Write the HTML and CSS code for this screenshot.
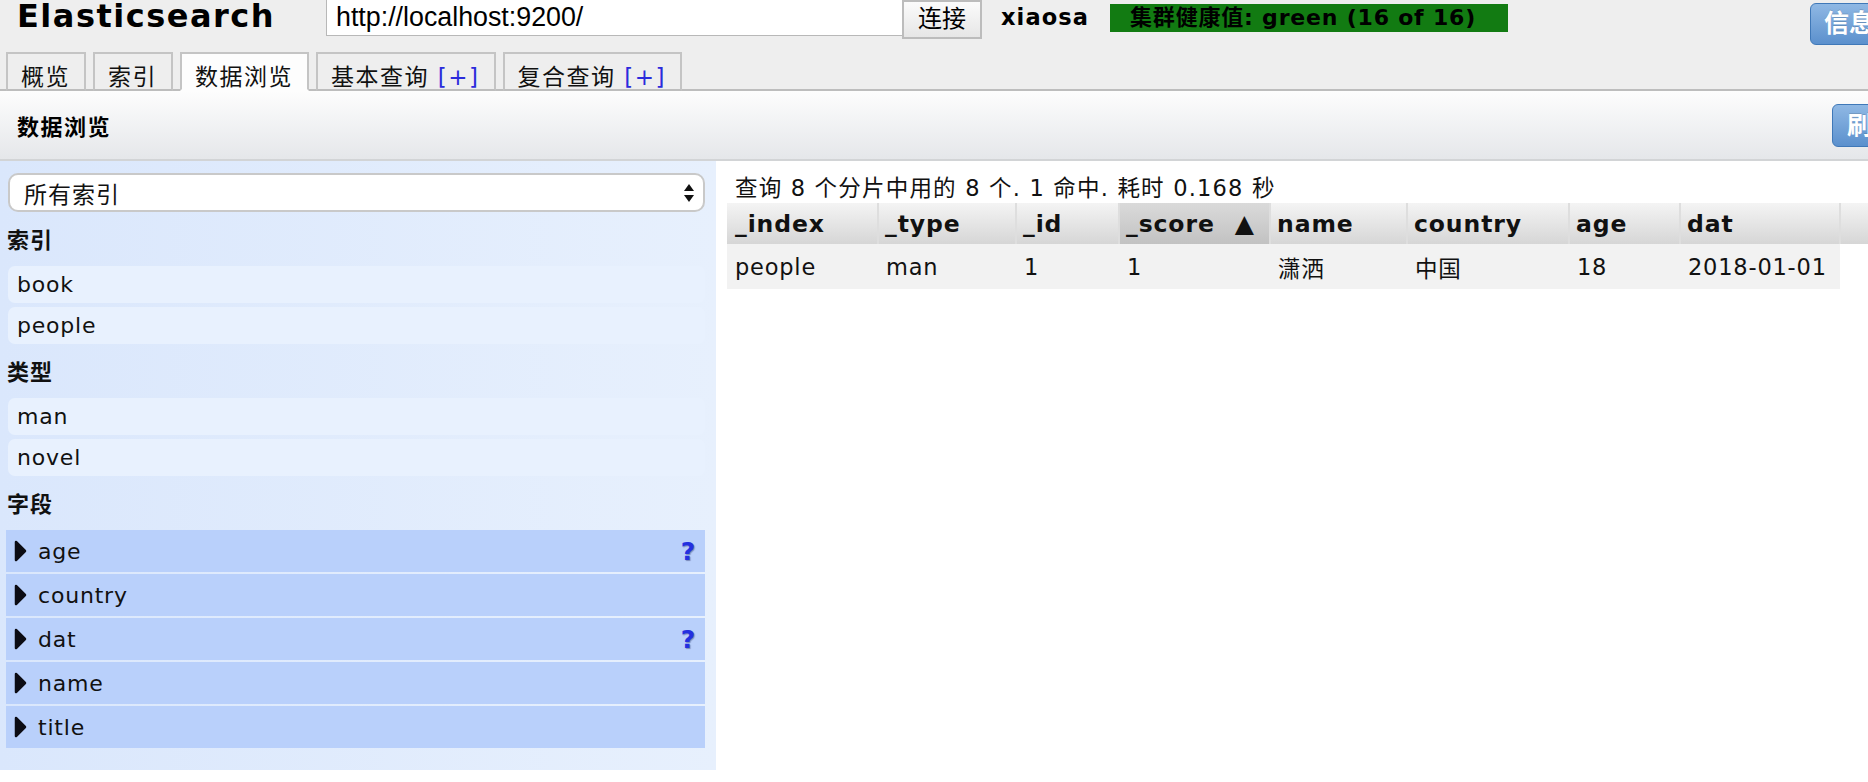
FILE: index.html
```html
<!DOCTYPE html>
<html lang="zh-CN">
<head>
<meta charset="utf-8">
<title>Elasticsearch</title>
<link rel="stylesheet" href="styles.css">
</head>
<body>
<div class="page">
  <header class="topbar">
    <h1 class="brand">Elasticsearch</h1>
    <div class="url">http://localhost:9200/</div>
    <div class="connect">连接</div>
    <span class="cluster">xiaosa</span>
    <span class="health">集群健康值: green (16 of 16)</span>
    <span class="grow"></span>
    <div class="btn-blue btn-info">信息 ▾</div>
  </header>

  <nav class="tabs">
    <div class="tab">概览</div>
    <div class="tab">索引</div>
    <div class="tab tab-active">数据浏览</div>
    <div class="tab">基本查询 <span class="plus">[+]</span></div>
    <div class="tab">复合查询 <span class="plus">[+]</span></div>
  </nav>

  <div class="toolbar">
    <h2 class="toolbar-title">数据浏览</h2>
    <span class="grow"></span>
    <div class="btn-blue btn-refresh">刷新</div>
  </div>

  <div class="main">
    <aside class="side">
      <div class="select">
        <span>所有索引</span>
        <svg class="updown" width="12" height="20" viewBox="0 0 12 20"><polygon points="6,1 11,8 1,8" fill="#111"/><polygon points="1,12 11,12 6,19" fill="#111"/></svg>
      </div>
      <h3 class="side-head">索引</h3>
      <div class="item">book</div>
      <div class="item">people</div>
      <h3 class="side-head">类型</h3>
      <div class="item">man</div>
      <div class="item">novel</div>
      <h3 class="side-head">字段</h3>
      <div class="field"><svg class="tri" width="13" height="22" viewBox="0 0 13 22"><polygon points="2,2 11,11 2,20" fill="#0c0c14" stroke="#0c0c14" stroke-width="2.5" stroke-linejoin="round"/></svg><span class="fname">age</span><span class="q">?</span></div>
      <div class="field"><svg class="tri" width="13" height="22" viewBox="0 0 13 22"><polygon points="2,2 11,11 2,20" fill="#0c0c14" stroke="#0c0c14" stroke-width="2.5" stroke-linejoin="round"/></svg><span class="fname">country</span></div>
      <div class="field"><svg class="tri" width="13" height="22" viewBox="0 0 13 22"><polygon points="2,2 11,11 2,20" fill="#0c0c14" stroke="#0c0c14" stroke-width="2.5" stroke-linejoin="round"/></svg><span class="fname">dat</span><span class="q">?</span></div>
      <div class="field"><svg class="tri" width="13" height="22" viewBox="0 0 13 22"><polygon points="2,2 11,11 2,20" fill="#0c0c14" stroke="#0c0c14" stroke-width="2.5" stroke-linejoin="round"/></svg><span class="fname">name</span></div>
      <div class="field"><svg class="tri" width="13" height="22" viewBox="0 0 13 22"><polygon points="2,2 11,11 2,20" fill="#0c0c14" stroke="#0c0c14" stroke-width="2.5" stroke-linejoin="round"/></svg><span class="fname">title</span></div>
    </aside>

    <section class="results">
      <div class="status">查询 8 个分片中用的 8 个. 1 命中. 耗时 0.168 秒</div>
      <table class="grid">
        <colgroup>
          <col class="c-index"><col class="c-type"><col class="c-id"><col class="c-score"><col class="c-name"><col class="c-country"><col class="c-age"><col class="c-dat"><col class="c-extra">
        </colgroup>
        <thead>
          <tr>
            <th class="first">_index</th>
            <th>_type</th>
            <th>_id</th>
            <th class="sorted">_score<span class="arrow">▲</span></th>
            <th>name</th>
            <th>country</th>
            <th>age</th>
            <th>dat</th>
            <th></th>
          </tr>
        </thead>
        <tbody>
          <tr>
            <td>people</td>
            <td>man</td>
            <td>1</td>
            <td>1</td>
            <td>潇洒</td>
            <td>中国</td>
            <td>18</td>
            <td>2018-01-01</td>
            <td class="empty"></td>
          </tr>
        </tbody>
      </table>
    </section>
  </div>
</div>
</body>
</html>
```

FILE: styles.css
```css
html, body {
  margin: 0;
  padding: 0;
  background: #ffffff;
  overflow: hidden;
}

.page {
  width: 1868px;
  height: 782px;
  overflow: hidden;
  font-family: "DejaVu Sans", "Noto Sans CJK SC", sans-serif;
  font-size: 22px;
  letter-spacing: 0.8px;
  color: #111;
}

.grow { flex: 1; }

/* ---------- top bar ---------- */
.topbar {
  display: flex;
  align-items: flex-start;
  height: 46px;
  background: #eeeeee;
}

.brand {
  margin: 0;
  padding-left: 17px;
  width: 326px;
  flex: none;
  box-sizing: border-box;
  font-size: 32px;
  line-height: 36px;
  margin-top: -2px;
  margin-bottom: -2px;
  font-weight: bold;
  letter-spacing: 1.5px;
  white-space: nowrap;
  color: #000;
}

.url {
  margin-top: -2px;
  width: 576px;
  flex: none;
  height: 38px;
  box-sizing: border-box;
  border: 1px solid #b8b8b8;
  border-right: 0;
  background: #fff;
  padding-left: 9px;
  font-family: "Liberation Sans", "Noto Sans CJK SC", sans-serif;
  font-size: 26.8px;
  line-height: 36px;
  letter-spacing: 0;
  color: #000;
}

.connect {
  width: 80px;
  flex: none;
  height: 39px;
  box-sizing: border-box;
  border: 2px solid #bcbcbc;
  background: linear-gradient(#fbfbfb, #e6e6e6);
  text-align: center;
  font-size: 24px;
  line-height: 35px;
  letter-spacing: 0;
  color: #000;
}

.cluster {
  margin-left: 19px;
  font-weight: bold;
  font-size: 22.5px;
  letter-spacing: 1.1px;
  line-height: 34px;
  color: #000;
}

.health {
  margin-left: 21px;
  margin-top: 4px;
  height: 28px;
  padding: 0 32px 0 20px;
  background: #127b12;
  font-weight: bold;
  line-height: 28px;
  white-space: nowrap;
  color: #000;
}

.btn-blue {
  box-sizing: border-box;
  flex: none;
  border: 1px solid #3f78b8;
  border-radius: 6px;
  background: linear-gradient(#8fb8e4, #5b90cd);
  color: #fff;
  font-weight: bold;
  font-size: 25px;
  letter-spacing: 0;
  text-shadow: 0 -1px 0 rgba(0,0,0,0.15);
  white-space: nowrap;
}

.btn-info {
  margin-top: 3px;
  margin-right: -52px;
  width: 110px;
  height: 42px;
  padding-left: 13px;
  line-height: 40px;
}

/* ---------- tabs ---------- */
.tabs {
  display: flex;
  align-items: flex-end;
  height: 45px;
  box-sizing: border-box;
  padding-left: 6px;
  border-bottom: 2px solid #bdbdbd;
  background: #eeeeee;
}

.tab {
  box-sizing: border-box;
  height: 39px;
  margin-right: 7px;
  margin-bottom: -2px;
  padding: 11px 14px 0 13px;
  border: 2px solid #c4c4c4;
  border-bottom: 2px solid #bdbdbd;
  background: #eeeeee;
  font-size: 23px;
  line-height: 24px;
  letter-spacing: 1.5px;
  white-space: nowrap;
  color: #111;
}

.tab-active {
  background: #fdfdfd;
  border-bottom-color: #fdfdfd;
}

.plus {
  color: #2b2bdc;
  letter-spacing: 1.5px;
}

/* ---------- toolbar ---------- */
.toolbar {
  display: flex;
  align-items: center;
  height: 70px;
  box-sizing: border-box;
  padding-left: 17px;
  border-bottom: 2px solid #d2d4d6;
  background: linear-gradient(#fdfdfd, #e5e7ea);
}

.toolbar-title {
  margin: 0;
  font-size: 22px;
  font-weight: bold;
  letter-spacing: 1.5px;
  color: #000;
}

.btn-refresh {
  margin-right: -64px;
  width: 100px;
  height: 43px;
  padding-left: 14px;
  line-height: 41px;
}

/* ---------- main ---------- */
.main {
  display: flex;
  align-items: flex-start;
}

.side {
  width: 716px;
  flex: none;
  box-sizing: border-box;
  padding: 12px 11px 20px 6px;
  background: linear-gradient(to right, #dae7fc, #e7f0fd);
}

.select {
  display: flex;
  align-items: center;
  justify-content: space-between;
  margin-left: 2px;
  height: 39px;
  box-sizing: border-box;
  padding: 0 8px 0 14px;
  border: 2px solid #c9c9c9;
  border-radius: 10px;
  background: #fff;
  font-size: 23px;
  letter-spacing: 1px;
  color: #111;
}

.updown { display: block; }

.side-head {
  margin: 14px 0 10px 1px;
  font-size: 22px;
  line-height: 30px;
  font-weight: bold;
  letter-spacing: 1px;
  color: #111;
}

.item {
  margin: 0 0 4px 2px;
  height: 37px;
  box-sizing: border-box;
  padding-left: 9px;
  border-radius: 7px;
  background: #e8f1fe;
  line-height: 37px;
}

.field {
  display: flex;
  align-items: center;
  height: 42px;
  margin-bottom: 2px;
  padding: 0 9px 0 8px;
  background: #b9d0fb;
}

.tri {
  display: block;
  flex: none;
}

.fname {
  margin-left: 11px;
  flex: 1;
}

.q {
  color: #2330e0;
  font-weight: bold;
  font-size: 25px;
  text-shadow: 1px 1px 1px rgba(0,0,60,0.35);
}

/* ---------- results ---------- */
.results {
  flex: 1;
  padding: 13px 0 0 11px;
  overflow: hidden;
}

.status {
  padding-left: 8px;
  font-size: 22.5px;
  line-height: 28px;
  letter-spacing: 1.2px;
  color: #111;
}

.grid {
  margin-top: 1px;
  border-collapse: collapse;
  table-layout: fixed;
  width: 1233px;
}

.c-index { width: 151px; }
.c-type { width: 138px; }
.c-id { width: 103px; }
.c-score { width: 151px; }
.c-name { width: 137px; }
.c-country { width: 162px; }
.c-age { width: 111px; }
.c-dat { width: 160px; }
.c-extra { width: 120px; }

.grid th {
  height: 41px;
  padding: 0 0 0 6px;
  border-left: 2px solid #dedede;
  background: linear-gradient(#f4f4f4, #d6d6d6);
  text-align: left;
  font-weight: bold;
  font-size: 23.5px;
  letter-spacing: 0.9px;
  white-space: nowrap;
  color: #111;
}

.grid th.first {
  border-left: 0;
  padding-left: 8px;
}

.grid th.sorted {
  background: linear-gradient(#dadada, #c2c2c2);
}

.arrow {
  margin-left: 20px;
  font-size: 25px;
}

.grid td {
  height: 45px;
  padding: 0 0 0 8px;
  background: #f2f2f2;
  font-size: 22.5px;
  white-space: nowrap;
  color: #111;
}

.grid td.empty {
  background: #fff;
}
```
